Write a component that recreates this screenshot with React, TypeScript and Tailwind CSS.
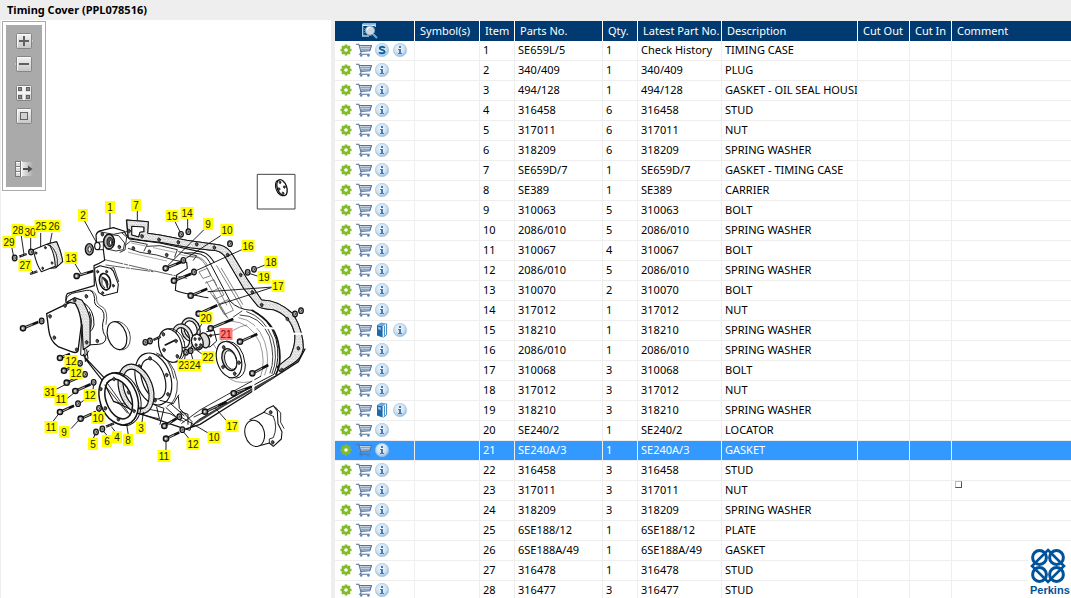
import { useState, type ReactNode } from "react";

type Extra = "history" | "book" | null;
type Part = {
  item: number;
  no: string;
  qty: number;
  latest: string;
  description: string;
  extra: Extra;
};

const part = (item: number, no: string, qty: number, description: string, extra: Extra = null, latest = no): Part => ({
  item,
  no,
  qty,
  latest,
  description,
  extra,
});

const PARTS: Part[] = [
  part(1, "SE659L/5", 1, "TIMING CASE", "history", "Check History"),
  part(2, "340/409", 1, "PLUG"),
  part(3, "494/128", 1, "GASKET - OIL SEAL HOUSING"),
  part(4, "316458", 6, "STUD"),
  part(5, "317011", 6, "NUT"),
  part(6, "318209", 6, "SPRING WASHER"),
  part(7, "SE659D/7", 1, "GASKET - TIMING CASE"),
  part(8, "SE389", 1, "CARRIER"),
  part(9, "310063", 5, "BOLT"),
  part(10, "2086/010", 5, "SPRING WASHER"),
  part(11, "310067", 4, "BOLT"),
  part(12, "2086/010", 5, "SPRING WASHER"),
  part(13, "310070", 2, "BOLT"),
  part(14, "317012", 1, "NUT"),
  part(15, "318210", 1, "SPRING WASHER", "book"),
  part(16, "2086/010", 1, "SPRING WASHER"),
  part(17, "310068", 3, "BOLT"),
  part(18, "317012", 3, "NUT"),
  part(19, "318210", 3, "SPRING WASHER", "book"),
  part(20, "SE240/2", 1, "LOCATOR"),
  part(21, "SE240A/3", 1, "GASKET"),
  part(22, "316458", 3, "STUD"),
  part(23, "317011", 3, "NUT"),
  part(24, "318209", 3, "SPRING WASHER"),
  part(25, "6SE188/12", 1, "PLATE"),
  part(26, "6SE188A/49", 1, "GASKET"),
  part(27, "316478", 1, "STUD"),
  part(28, "316477", 3, "STUD"),
];

function Gear() {
  return (
    <svg width="12" height="12" viewBox="0 0 12 12" aria-hidden="true">
      <g fill="#84bb2b">
        {[0, 45, 90, 135].map((a) => (
          <rect key={a} x="4.7" y="0.5" width="2.6" height="11" transform={`rotate(${a} 6 6)`} />
        ))}
      </g>
      <circle cx="6" cy="6" r="3.2" fill="none" stroke="#84bb2b" strokeWidth="2.4" />
      <circle cx="6" cy="6" r="1.8" fill="#fff" />
    </svg>
  );
}

function Cart() {
  return (
    <svg width="16" height="14" viewBox="0 0 16 14" aria-hidden="true">
      <path d="M3.5 2.5H15.6L13.8 7.8L5 8.4Z" fill="#e3ebf4" />
      <path d="M6 2.5V8M8 2.5V8M10 2.5V8M12 2.5V8M14 2.5V7.5M4 4.5H15M4.5 6.5H14.4" stroke="#8095b4" strokeWidth=".7" fill="none" />
      <path d="M0 1.2H2.8L5.2 9.8M3.4 2.5H15.6L13.8 7.8L5 8.4M5 9.8L3.8 11.2H13.8" stroke="#54749f" strokeWidth="1.1" fill="none" />
      <circle cx="5.2" cy="12.6" r="1.2" fill="#4a83c0" />
      <circle cx="12.4" cy="12.6" r="1.2" fill="#4a83c0" />
    </svg>
  );
}

function Disc({ children }: { children: ReactNode }) {
  return (
    <svg width="14" height="14" viewBox="0 0 14 14" aria-hidden="true">
      <defs>
        <radialGradient id="disc" cx=".45" cy=".4" r=".62">
          <stop offset="0" stopColor="#f4f9fd" />
          <stop offset=".6" stopColor="#cfe2f1" />
          <stop offset="1" stopColor="#8fb9da" />
        </radialGradient>
      </defs>
      <circle cx="7" cy="7" r="6.7" fill="url(#disc)" stroke="#a3c5e0" strokeWidth=".6" />
      {children}
    </svg>
  );
}

function Info() {
  return (
    <Disc>
      <path d="M6 3H8V5H6ZM5 6H8V10H9V11H5V10H6V7H5Z" fill="#4a78ae" />
    </Disc>
  );
}

function Supersede() {
  return (
    <Disc>
      <path d="M9.8 4.9C9 3.6 4.8 3.2 4.8 5.2C4.8 7.2 9.6 6.4 9.6 8.8C9.6 10.8 5 10.6 4.2 9.2" stroke="#0a63a0" strokeWidth="1.9" fill="none" />
    </Disc>
  );
}

function Book() {
  return (
    <svg width="12" height="16" viewBox="0 0 12 16" aria-hidden="true">
      <path d="M1 3L5 .6L10.5 1.4V13L7 15.4L1 13Z" fill="#fff" />
      <path d="M1 3L6.6 4.2V15.6L1 13.4Z" fill="#1c69ab" />
      <path d="M1 3L5 .6L10.6 1.4L6.6 4.2Z" fill="#6fa6d3" />
      <path d="M10.6 1.6V12.8L7.4 15.2M8.4 3.6V13.8" stroke="#3a87c4" strokeWidth="1" fill="none" />
      <path d="M2.2 4.8L4.8 5.4V8L2.2 7.2Z" fill="#9cc6e6" />
    </svg>
  );
}

function SearchPage() {
  return (
    <svg width="16" height="16" viewBox="0 0 16 16" aria-hidden="true">
      <path d="M.7 1V13H7M.7 1H13.3V4" stroke="#a9d3ea" strokeWidth="1.3" fill="none" />
      <path d="M1 2.4H13" stroke="#d9eef8" strokeWidth="1.2" />
      <path d="M2.8 5V11.5" stroke="#6fa6c8" strokeWidth="1" strokeDasharray="1 1" />
      <path d="M11.2 11.2L15 15" stroke="#6db0da" strokeWidth="2" />
      <circle cx="8" cy="7.6" r="4.6" fill="#c9d6e2" stroke="#8aa0b5" strokeWidth="1" />
      <path d="M5 7A3.2 3.2 0 0 1 8.4 4.4" stroke="#fff" strokeWidth="1.2" fill="none" />
    </svg>
  );
}

function Tile({ children, nub }: { children: ReactNode; nub?: "left" | "right" }) {
  return (
    <svg width="20" height="18" viewBox="0 0 20 18" aria-hidden="true">
      <defs>
        <linearGradient id="tile" x1="0" y1="0" x2="0" y2="1">
          <stop offset="0" stopColor="#f4f4f4" />
          <stop offset="1" stopColor="#c6c6c6" />
        </linearGradient>
      </defs>
      {nub === "right" && <path d="M17 6L19.5 9L17 12Z" fill="#f0f0f0" stroke="#8a8a8a" strokeWidth=".7" />}
      {nub === "left" && <path d="M3 6L.5 9L3 12Z" fill="#f0f0f0" stroke="#8a8a8a" strokeWidth=".7" />}
      <rect x="2.5" y="1.5" width="15" height="15" rx="1" fill="url(#tile)" stroke="#858585" />
      <path d="M3.5 15V2.500H16" fill="none" stroke="#fafafa" />
      {children}
    </svg>
  );
}

function ToolButton({ label, children }: { label: string; children: ReactNode }) {
  return (
    <button type="button" aria-label={label} className="flex h-[23px] w-full items-center justify-center">
      {children}
    </button>
  );
}

function Toolbar() {
  return (
    <div className="absolute top-px left-px border border-[#aaa] bg-white p-[3px]">
      <div className="flex w-9 flex-col bg-[#aaa] pt-1 pb-[7px]">
        <ToolButton label="Zoom in">
          <Tile nub="right">
            <path d="M5 9H15M10 4V14" stroke="#606060" strokeWidth="2" />
          </Tile>
        </ToolButton>
        <ToolButton label="Zoom out">
          <Tile nub="left">
            <path d="M5 9H15" stroke="#606060" strokeWidth="2" />
          </Tile>
        </ToolButton>
        <div className="mt-1.5">
          <ToolButton label="Fit to window">
            <Tile>
              <path d="M10 2V16M3 9H17" stroke="#f4f4f4" strokeWidth="2" />
              {[4.5, 12.5].map((x) =>
                [3.5, 11.5].map((y) => <rect key={`${x}${y}`} x={x} y={y} width="3" height="3" fill="#8c8c8c" stroke="#606060" />),
              )}
            </Tile>
          </ToolButton>
        </div>
        <ToolButton label="Actual size">
          <Tile>
            <rect x="6.5" y="5.5" width="7" height="7" fill="#d0d0d0" stroke="#606060" />
          </Tile>
        </ToolButton>
        <div className="mt-[30px]">
          <ToolButton label="Show callouts">
            <svg width="20" height="18" viewBox="0 0 20 18" aria-hidden="true">
              <defs>
                <linearGradient id="fade">
                  <stop offset="0" stopColor="#f2f2f2" />
                  <stop offset="1" stopColor="#aaaaaa" />
                </linearGradient>
              </defs>
              <rect x="7" y="2" width="12" height="14" fill="url(#fade)" />
              <rect x="1.5" y="1.5" width="5" height="15" fill="#dcdcdc" stroke="#777" />
              <path d="M1 6.5H7M1 11.5H7" stroke="#808080" />
              <path d="M2 2.5H6M2 7.5H6M2 12.5H6M7.5 1V17" stroke="#fff" />
              <path d="M9 9H15" stroke="#505050" strokeWidth="2" />
              <path d="M14 5.5L18.5 9L14 12.5Z" fill="#505050" />
            </svg>
          </ToolButton>
        </div>
      </div>
    </div>
  );
}

type Pt = [number, number];

const BOLTS: [number, number, number, number][] = [
  [50, 183, 100, 168],
  [317, 160, 366, 140],
  [342, 197, 394, 176],
  [392, 242, 442, 221],
  [416, 296, 472, 271],
  [452, 340, 520, 312],
  [540, 380, 592, 357],
  [577, 475, 625, 450],
  [521, 535, 575, 515],
  [435, 590, 500, 560],
  [-111, 340, -65, 321],
  [0, 429, 30, 417],
  [12, 467, 50, 450],
  [20, 503, 65, 483],
  [46, 528, 92, 508],
  [0, 591, 42, 572],
  [62, 611, 108, 591],
  [313, 633, 350, 610],
  [318, 671, 358, 652],
];

const WASHERS: Pt[] = [
  [370, 136], [402, 171], [363, 58], [385, 50], [510, 86], [582, 163], [563, 172], [723, 287], [705, 297],
  [-55, 318], [60, 445], [75, 478], [101, 502], [54, 566], [117, 580], [358, 605], [367, 644], [108, 651],
  [127, 642], [-136, 129], [-87, 111], [256, 382], [270, 378], [378, 412], [392, 407],
];

const STUDS: [number, number, number, number][] = [
  [138, 635, 162, 625],
  [-122, 125, -100, 117],
  [-90, 177, -68, 169],
  [280, 375, 302, 365],
  [402, 404, 424, 395],
];

const LEADERS = [
  "M72 15L108 80", "M150 -5V38", "M232 -20V15", "M345 20L360 50", "M383 10V42", "M438 38L325 150", "M485 60L378 130",
  "M550 102L406 168", "M615 150L590 160", "M592 183L570 176", "M640 216L444 230", "M640 216L480 268", "M44 145L62 175",
  "M-118 50L-108 118", "M-88 65V105", "M-58 55V95", "M-24 55L-30 85", "M-145 95L-140 120", "M-95 158L-82 170",
  "M428 322L405 362", "M482 357L445 362", "M430 420L408 404", "M373 438L376 418", "M400 438L393 414", "M-10 522L18 508",
  "M22 550L42 534", "M98 530L101 510", "M72 556L60 564", "M118 594V586", "M-20 618L-2 594", "M34 640L58 614",
  "M98 676L105 658", "M140 660L130 648", "M168 653L155 636", "M205 660L200 628", "M245 628L250 592",
  "M502 620L465 578", "M446 655L366 608", "M388 672L370 650", "M318 708V678",
];

function Speckled({ d }: { d: string }) {
  return (
    <>
      <path d={d} fill="#fff" />
      <path d={d} fill="url(#speckle)" fillRule="evenodd" stroke="#111" strokeWidth="3.2" />
    </>
  );
}

function Ring({ cx, cy, rx, ry, t, a = -16, speckled = false, w = 3.5 }: { cx: number; cy: number; rx: number; ry: number; t: number; a?: number; speckled?: boolean; w?: number }) {
  return (
    <g transform={`rotate(${a} ${cx} ${cy})`} fill="none">
      <ellipse cx={cx} cy={cy} rx={rx - t / 2} ry={ry - t / 2} stroke="#fff" strokeWidth={t} />
      {speckled && <ellipse cx={cx} cy={cy} rx={rx - t / 2} ry={ry - t / 2} stroke="url(#speckle)" strokeWidth={t} />}
      <ellipse cx={cx} cy={cy} rx={rx} ry={ry} stroke="#111" strokeWidth={w} />
      <ellipse cx={cx} cy={cy} rx={rx - t} ry={ry - t} stroke="#111" strokeWidth={w} />
    </g>
  );
}

function Holes({ at, r = 4 }: { at: Pt[]; r?: number }) {
  return (
    <>
      {at.map(([x, y]) => (
        <ellipse key={`${x},${y}`} cx={x} cy={y} rx={r} ry={r + 1.5} fill="#555" stroke="#111" strokeWidth="2" transform={`rotate(-15 ${x} ${y})`} />
      ))}
    </>
  );
}

function Drawing() {
  return (
    <g transform="translate(60 215) scale(.33333)" fill="none" stroke="#111" strokeWidth="2.6" strokeLinecap="round" strokeLinejoin="round">
      {/* inset with the locator */}
      <rect x="593" y="-122" width="112" height="104" strokeWidth="3" stroke="#444" />
      <ellipse cx="661" cy="-81" rx="13" ry="24" transform="rotate(-20 661 -81)" strokeWidth="3" />
      <ellipse cx="666" cy="-82" rx="14" ry="25" transform="rotate(-20 666 -82)" fill="#fff" strokeWidth="4" />
      <Holes at={[[660, -98], [657, -78], [673, -84], [669, -65]]} r={2.5} />

      {/* case gasket */}
      <Speckled d="M200 15L265 20L263 55L300 60L380 76L480 90Q505 96 518 120L560 190L605 255Q655 255 700 297Q730 350 730 400Q725 430 700 445L660 470L652 455L690 425Q708 390 704 355Q690 300 640 284Q605 282 594 274L552 222L495 125Q480 105 455 106L390 98L300 82L245 76L205 68ZM215 34V60L236 66L240 52L252 50V36Z" />
      <Holes at={[[207, 48], [246, 64], [297, 74], [355, 82], [410, 88], [463, 98], [503, 120], [542, 180], [577, 232], [605, 270], [682, 312], [715, 400], [666, 465]]} />
      <path d="M735 402L715 440L560 540L420 628L378 642M652 480L500 566L418 614L395 634" strokeWidth="4" />
      <path d="M640 488L490 572L410 622" strokeWidth="6" stroke="#444" />

      {/* case top edge and left boss */}
      <path d="M110 92L108 60Q112 48 126 46L160 38L192 48L200 62L208 72L300 84L430 112Q450 120 462 142" strokeWidth="3.5" />
      <path d="M118 50L160 58L200 50M186 54L200 66L195 105L180 112" />
      <path d="M200 88L212 78L262 88L252 108M262 94L300 92L352 104L344 126M356 110L410 122L400 136M205 100L240 112L290 120L345 136L380 142" />
      <path d="M214 84L256 93M280 98L344 112M358 118L402 128" strokeWidth="1.6" stroke="#666" />
      <ellipse cx="88" cy="103" rx="12" ry="17" fill="#999" strokeWidth="4" />
      <ellipse cx="89" cy="103" rx="5" ry="8" fill="#fff" />
      <path d="M112 82L130 80V104L114 104Z" fill="#fff" />
      <ellipse cx="112" cy="93" rx="8" ry="11" fill="#fff" strokeWidth="3.5" />
      <path d="M145 58L176 62L194 84L190 104L168 108L140 102Z" fill="#fff" />
      <ellipse cx="147" cy="80" rx="16" ry="22" fill="#bbb" strokeWidth="4.5" />
      <ellipse cx="150" cy="81" rx="9" ry="14" fill="#555" />
      <ellipse cx="152" cy="83" rx="4" ry="7" fill="#fff" />
      <Holes at={[[178, 96], [220, 100], [268, 110], [320, 120], [127, 58]]} />
      <path d="M130 104L134 136Q118 146 102 152L103 212L22 236Q16 244 18 262" strokeWidth="3.5" />
      <path d="M134 134L380 190M138 150L280 170" strokeDasharray="56 5 10 5" strokeWidth="2" />
      <path d="M205 112L320 138" strokeWidth="1.8" stroke="#777" />

      {/* idler flange */}
      <path d="M104 160L120 152L152 160L160 168L175 208L172 232L130 242L116 232Q104 200 104 160Z" fill="#fff" strokeWidth="3.2" />
      <path d="M152 160L162 158L176 200" />
      <ellipse cx="135" cy="200" rx="16" ry="25" transform="rotate(-16 135 200)" strokeWidth="5" fill="#fff" />
      <path d="M126 186Q150 192 142 220Q140 200 126 186Z" fill="#222" />
      <path d="M126 190V208L134 218" />
      <Holes at={[[113, 170], [140, 170], [160, 212], [128, 234]]} r={3} />

      {/* front cover body */}
      <path d="M380 142L382 160L350 180L346 226Q362 234 392 238L430 246L444 248" strokeWidth="3.2" />
      <path d="M374 114Q434 108 448 140L510 258Q534 284 575 286Q628 310 648 372Q662 430 642 478L600 500L500 556" strokeWidth="3" />
      <path d="M384 124Q420 122 434 146L500 270M408 124Q432 130 442 150M470 152L546 280M484 160L548 268M440 200L504 310M460 242L500 306" strokeWidth="2" stroke="#444" />
      <path d="M418 170L442 160L452 182L430 190ZM436 204L462 194L470 212M452 232L480 218L492 240L466 252ZM476 268L504 254L520 286L494 298Z" strokeWidth="2" stroke="#444" />
      <path d="M546 288L520 306M540 300Q600 300 628 364Q648 430 630 474M560 290Q612 306 638 370Q656 430 636 476" strokeWidth="2.4" />
      <path d="M512 318Q572 320 600 384Q618 440 602 484M536 308Q590 316 614 380Q632 440 614 480" stroke="#555" strokeWidth="1.8" />
      <path d="M576 286Q640 320 654 380Q668 440 648 478" strokeWidth="5" />
      <path d="M482 380Q520 336 560 330M500 482Q520 510 575 500M468 400L456 380" stroke="#555" strokeWidth="1.8" />
      <path d="M602 484L500 540L420 585L365 625M575 516L470 574L402 606" strokeWidth="2.6" />
      <path d="M588 336L690 344M690 356H748M580 458V540" stroke="#fff" strokeWidth="6" />

      {/* front cover round flange */}
      <path d="M500 378Q548 380 556 450Q556 486 528 490" strokeWidth="3" />
      <ellipse cx="507" cy="434" rx="36" ry="56" transform="rotate(-18 507 434)" fill="#fff" strokeWidth="3.5" />
      <ellipse cx="508" cy="434" rx="21" ry="34" transform="rotate(-18 508 434)" fill="#ccc" strokeWidth="4" />
      <ellipse cx="512" cy="435" rx="17" ry="29" transform="rotate(-18 512 435)" fill="#fff" />
      <Holes at={[[491, 397], [537, 443], [489, 456], [524, 476]]} />

      {/* oil seal housing flange */}
      <path d="M280 416Q340 425 352 500Q354 560 322 574M290 414Q330 425 342 490" strokeWidth="2.4" />
      <Ring cx={280} cy={492} rx={52} ry={80} t={18} a={-18} />
      <Holes at={[[238, 454], [270, 430], [320, 480], [324, 538], [285, 556]]} />
      <path d="M284 570L312 580L300 628M290 576L298 610M318 578L362 618M332 566L372 602M300 556L340 566L356 540" strokeWidth="3" />
      <path d="M355 545L358 580L396 620L390 646L370 640M362 590L384 598V628" strokeWidth="3" />

      {/* oil seal housing gasket and carrier */}
      <path d="M70 418L78 434L130 500L160 558L240 596L370 640M78 430L140 496" strokeWidth="3.5" />
      <path d="M160 560L330 596L372 620M240 598L300 612" strokeWidth="2.6" />
      <Ring cx={228} cy={522} rx={50} ry={77} t={15} a={-20} speckled />
      <ellipse cx="182" cy="552" rx="58" ry="82" transform="rotate(-20 182 552)" strokeWidth="3" />
      <Ring cx={176} cy={552} rx={56} ry={80} t={18} a={-20} w={4.5} />
      <path d="M134 510L202 594M140 502L210 600" strokeWidth="2.6" />
      <Holes at={[[162, 492], [206, 532], [222, 588], [175, 613], [136, 580], [122, 522]]} />

      {/* rear casting and core plug */}
      <path d="M18 256Q20 236 50 232L80 226Q100 222 104 250Q100 270 118 278Q140 290 128 326Q126 352 138 366Q138 386 116 388L80 390" strokeWidth="3" />
      <path d="M92 226Q112 232 110 256Q112 270 128 276Q146 290 138 328" strokeWidth="2" />
      <path d="M70 262Q104 284 102 330Q96 350 90 348M88 290Q98 310 92 340" strokeWidth="3" />
      <ellipse cx="178" cy="362" rx="32" ry="44" transform="rotate(-18 178 362)" strokeWidth="2" />
      <ellipse cx="171" cy="362" rx="28" ry="43" transform="rotate(-18 171 362)" fill="#fff" strokeWidth="3.5" />
      <Speckled d="M20 262L44 248L66 256Q84 284 90 312L90 390L70 404L66 330Q60 288 40 268Z" />
      <path d="M66 330L62 420L76 424L86 408M74 400L76 440L84 430L80 404" strokeWidth="3" />
      <path d="M-40 296L30 262L46 266Q62 292 64 330L54 408Q50 416 34 410L-4 396Q-30 380 -34 344Z" fill="#fff" strokeWidth="4" />
      <Holes at={[[-30, 304], [15, 272], [-17, 368], [50, 404], [44, 256], [80, 382], [112, 378], [79, 244]]} />

      {/* cover plate and its gasket */}
      <Speckled d="M-36 86L-10 80Q4 110 8 140L-12 158L-40 160Z" />
      <path d="M-80 104L-40 88L-30 92Q-16 116 -14 154L-56 170Q-72 148 -80 104Z" fill="#fff" strokeWidth="3.2" />
      <path d="M-30 90Q-4 112 -8 152L-14 156" />
      <Holes at={[[-72, 114], [-44, 98], [-24, 144], [-52, 160]]} r={2.5} />

      {/* water pump plate, gasket and locator */}
      <Ring cx={392} cy={344} rx={28} ry={36} t={9} speckled />
      <path d="M440 350L462 346L470 378L450 396L432 392" fill="#fff" strokeWidth="3" />
      <Ring cx={368} cy={368} rx={31} ry={42} t={11} speckled />
      <ellipse cx="336" cy="391" rx="38" ry="52" transform="rotate(-16 336 391)" strokeWidth="2.4" />
      <ellipse cx="331" cy="392" rx="34" ry="51" transform="rotate(-16 331 392)" fill="#fff" strokeWidth="3.5" />
      <path d="M316 390L345 376" strokeWidth="5" />
      <Holes at={[[310, 358], [348, 378], [312, 405], [352, 424]]} />
      <ellipse cx="434" cy="376" rx="14" ry="23" transform="rotate(-16 434 376)" fill="#ddd" strokeWidth="4" />
      <ellipse cx="412" cy="381" rx="17" ry="24" transform="rotate(-16 412 381)" fill="#fff" strokeWidth="4" />
      <Holes at={[[405, 372], [418, 372], [408, 390], [422, 390], [452, 362]]} r={3} />

      {/* cap */}
      <path d="M560 612L612 588L636 576L652 592L654 626L666 650L664 672L640 694L628 684L600 690Z" fill="#fff" stroke="none" />
      <path d="M570 614L612 592L620 582L640 572L652 588L654 626L666 650L664 672L640 694L628 684L598 692" strokeWidth="3.2" />
      <path d="M646 576L662 594L662 622L672 640M612 592L640 604M640 604Q654 636 640 668L628 672V684" />
      <ellipse cx="584" cy="655" rx="29" ry="40" transform="rotate(-14 584 655)" fill="#fff" strokeWidth="3.2" />
      <Holes at={[[632, 592], [638, 682]]} r={4} />

      {LEADERS.map((d) => (
        <path key={d} d={d} strokeWidth="2.8" />
      ))}
      {BOLTS.map(([x, y, x2, y2]) => (
        <g key={`${x},${y}`}>
          <path d={`M${x} ${y}L${x2} ${y2}`} strokeWidth="8" strokeLinecap="butt" />
          <path d={`M${x + 10} ${y - 4}L${x + (x2 - x) * 0.6} ${y + (y2 - y) * 0.6}`} stroke="#ddd" strokeWidth="2.4" />
          <ellipse cx={x} cy={y} rx="8" ry="8" fill="#888" strokeWidth="4" />
          <ellipse cx={x - 1} cy={y} rx="2.5" ry="3" fill="#eee" stroke="none" />
        </g>
      ))}
      {STUDS.map(([x, y, x2, y2]) => (
        <g key={`${x},${y}`}>
          <path d={`M${x} ${y}L${x2} ${y2}`} strokeWidth="7" strokeLinecap="butt" />
          <path d={`M${x} ${y}L${x2} ${y2}`} strokeWidth="3" stroke="#bbb" strokeDasharray="2 3" strokeLinecap="butt" />
        </g>
      ))}
      {WASHERS.map(([x, y]) => (
        <g key={`${x},${y}`}>
          <ellipse cx={x} cy={y} rx="7" ry="8.5" fill="#aaa" strokeWidth="3.6" />
          <ellipse cx={x - 1} cy={y} rx="2.5" ry="3.5" fill="#fff" strokeWidth="1.5" />
        </g>
      ))}
    </g>
  );
}

const CALLOUTS: [number, number, number][] = [
  [2, 83, 215], [1, 110, 207], [7, 136, 205], [15, 172, 216], [14, 187, 213], [9, 208, 224], [10, 227, 230],
  [16, 248, 246], [18, 271, 262], [19, 264, 277], [17, 278, 286], [28, 18, 230], [30, 30, 232], [25, 41, 226],
  [26, 54, 226], [29, 9, 242], [27, 25, 265], [13, 71, 258], [20, 206, 318], [22, 208, 357], [23, 184, 365],
  [24, 195, 365], [12, 71, 361], [12, 76, 373], [31, 50, 392], [11, 61, 399], [12, 90, 395], [10, 98, 418],
  [11, 51, 427], [9, 64, 432], [5, 93, 444], [6, 107, 441], [4, 117, 437], [8, 128, 440], [3, 141, 428],
  [17, 232, 426], [10, 214, 437], [12, 193, 444], [11, 164, 456], [21, 226, 334],
];

function Diagram({ selected, onSelect }: { selected: number; onSelect: (item: number) => void }) {
  return (
    <svg viewBox="1 20 330 578" className="block w-full" role="img" aria-label="Timing cover exploded view">
      <defs>
        <pattern id="speckle" width="11" height="10" patternUnits="userSpaceOnUse">
          <rect width="11" height="10" fill="#f2f2f2" />
          <path d="M1 1h2v2h-2zM6 3h2v1.500h-2zM3 7h1.500v2h-1.500zM9 8h2v1.500h-2z" fill="#555" />
        </pattern>
      </defs>
      <Drawing />
      {CALLOUTS.map(([n, x, y]) => {
        const w = n > 9 ? 13 : 10;
        return (
          <g key={`${n},${x}`} onClick={() => onSelect(n)} className="cursor-pointer">
            <rect x={x - w / 2} y={y - 6} width={w} height="12" fill={n === selected ? "#ff7b7b" : "#ffff00"} />
            <text x={x} y={y + 3.5} textAnchor="middle" className="font-['Liberation_Sans',Arial,sans-serif] text-[10px]" fill={n === selected ? "#7a1010" : "#222200"}>
              {n}
            </text>
          </g>
        );
      })}
    </svg>
  );
}

function IconButton({ label, children }: { label: string; children: ReactNode }) {
  return (
    <button type="button" aria-label={label} className="flex w-[18px] items-center justify-center">
      {children}
    </button>
  );
}

const HEADINGS = ["Symbol(s)", "Item", "Parts No.", "Qty.", "Latest Part No.", "Description", "Cut Out", "Cut In", "Comment"];

const CELL = "h-5 overflow-hidden border-r border-b border-[#eee] p-0 pb-0.5 pl-[3px] whitespace-nowrap";

function PartsTable({ selected, onSelect }: { selected: number; onSelect: (item: number) => void }) {
  return (
    <table className="w-full table-fixed border-separate border-spacing-0 bg-white leading-[17px]">
      <colgroup>
        <col className="w-20" />
        <col className="w-[65px]" />
        <col className="w-[35px]" />
        <col className="w-[88px]" />
        <col className="w-[35px]" />
        <col className="w-[84px]" />
        <col className="w-[136px]" />
        <col className="w-[52px]" />
        <col className="w-[42px]" />
        <col />
      </colgroup>
      <thead>
        <tr className="bg-[#003a70] text-white">
          <th className="h-5 border-r border-white p-0" aria-label="Actions">
            <span className="flex justify-center pr-2.5">
              <SearchPage />
            </span>
          </th>
          {HEADINGS.map((h) => (
            <th key={h} className="h-5 border-r border-white p-0 pb-0.5 pl-[5px] text-left font-normal whitespace-nowrap last:border-r-0">
              {h}
            </th>
          ))}
        </tr>
      </thead>
      <tbody>
        {PARTS.map((p) => (
          <tr key={p.item} onClick={() => onSelect(p.item)} className={p.item === selected ? "bg-[#3399ff] text-white" : "text-black"}>
            <td className="h-5 border-r border-b border-[#eee] p-0 pb-0.5 pl-0.5">
              <div className="flex h-[17px] items-center">
                <IconButton label="Options">
                  <Gear />
                </IconButton>
                <IconButton label="Add to cart">
                  <Cart />
                </IconButton>
                {p.extra === "history" && (
                  <IconButton label="Supersession">
                    <Supersede />
                  </IconButton>
                )}
                {p.extra === "book" && (
                  <IconButton label="Catalogue">
                    <Book />
                  </IconButton>
                )}
                <IconButton label="Information">
                  <Info />
                </IconButton>
              </div>
            </td>
            <td className={CELL} />
            <td className={CELL}>{p.item}</td>
            <td className={CELL}>{p.no}</td>
            <td className={CELL}>{p.qty}</td>
            <td className={CELL}>{p.latest}</td>
            <td className={CELL}>{p.description}</td>
            <td className={CELL} />
            <td className={CELL} />
            <td className="h-5 border-b border-[#eee] p-0" />
          </tr>
        ))}
      </tbody>
    </table>
  );
}

function PerkinsLogo() {
  const loops: Pt[] = [
    [9.5, 9.5],
    [26.5, 9.5],
    [9.5, 26.5],
    [26.5, 26.5],
  ];
  return (
    <div className="absolute right-0 bottom-0 flex w-[43px] flex-col bg-white pb-px pl-0.5 text-[#00529b]">
      <svg width="36" height="36" viewBox="0 0 36 36" aria-hidden="true">
        <g fill="none" stroke="currentColor">
          {loops.map(([x, y]) => (
            <circle key={`${x},${y}`} cx={x} cy={y} r="6.9" strokeWidth="3" />
          ))}
          <path d="M18 2L34 18L18 34L2 18Z" strokeWidth="2.6" />
        </g>
      </svg>
      <span className="font-['Liberation_Sans',Arial,sans-serif] text-[11px] leading-[13px] font-bold">Perkins</span>
    </div>
  );
}

export default function App() {
  const [selected, setSelected] = useState(21);
  return (
    <div className="relative flex h-screen flex-col overflow-hidden bg-[#eee] font-['Noto_Sans','Open_Sans',sans-serif] text-[11px] text-black">
      <h1 className="h-5 shrink-0 pl-[7px] leading-5 font-bold">Timing Cover (PPL078516)</h1>
      <main className="flex min-h-0 flex-1 gap-1">
        <section className="relative ml-px w-[330px] shrink-0 overflow-hidden bg-white">
          <Diagram selected={selected} onSelect={setSelected} />
          <Toolbar />
        </section>
        <section className="relative min-w-0 flex-1 overflow-hidden pt-px">
          <PartsTable selected={selected} onSelect={setSelected} />
          <span className="absolute top-[461px] left-[620px] size-[7px] border border-t-[#bbb] border-r-[#555] border-b-[#555] border-l-[#bbb] bg-white" />
          <PerkinsLogo />
        </section>
      </main>
    </div>
  );
}
